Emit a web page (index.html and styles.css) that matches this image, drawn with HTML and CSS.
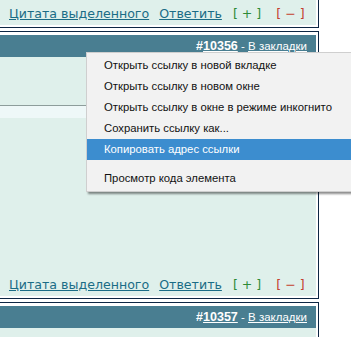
FILE: index.html
```html
<!DOCTYPE html>
<html lang="ru">
<head>
    <meta charset="UTF-8">
    <meta name="viewport" content="width=device-width, initial-scale=1.0">
    <title>Форум</title>
    <link rel="stylesheet" href="styles.css">
</head>
<body>
    <div class="thread">
        <div class="post post-prev">
            <div class="post-body">
                <div class="post-links">
                    <a href="#">Цитата выделенного</a>
                    <a href="#">Ответить</a>
                    <span class="vote-up">[ + ]</span>
                    <span class="vote-down">[ &minus; ]</span>
                </div>
            </div>
        </div>

        <div class="post">
            <div class="post-head">
                <b>#<a href="#">10356</a></b> - <a href="#">В закладки</a>
            </div>
            <div class="post-body post-body-tall">
                <div class="post-sign"></div>
                <div class="post-links">
                    <a href="#">Цитата выделенного</a>
                    <a href="#">Ответить</a>
                    <span class="vote-up">[ + ]</span>
                    <span class="vote-down">[ &minus; ]</span>
                </div>
            </div>
        </div>

        <div class="post">
            <div class="post-head">
                <b>#<a href="#">10357</a></b> - <a href="#">В закладки</a>
            </div>
            <div class="post-body"></div>
        </div>
    </div>

    <!-- context menu over the link -->
    <ul class="context-menu">
        <li>Открыть ссылку в новой вкладке</li>
        <li>Открыть ссылку в новом окне</li>
        <li>Открыть ссылку в окне в режиме инкогнито</li>
        <li>Сохранить ссылку как...</li>
        <li class="active">Копировать адрес ссылки</li>
        <li class="separator"></li>
        <li>Просмотр кода элемента</li>
    </ul>
</body>
</html>
```

FILE: styles.css
```css
body {
    margin: 0;
    background: #fff;
    overflow: hidden;
    font-family: "DejaVu Sans", Verdana, sans-serif;
}
.thread {
    width: 323px;
    margin-left: -4px;
}
.post {
    border: 1px solid #0d2644;
    padding: 3px 2px 2px;
    margin-bottom: 3px;
    background: #fff;
}
.post-prev {
    margin-top: -2px;
    padding-top: 0;
}
.post-head {
    height: 22px;
    line-height: 22px;
    background: #497e91;
    color: #fff;
    text-align: right;
    padding-right: 9px;
    font-family: "Liberation Sans", Arial, sans-serif;
    font-size: 11.5px;
}
.post-head b {
    font-size: 12.5px;
}
.post-head a {
    color: #fff;
}
.post-body {
    background: #dff0eb;
    padding: 6px 10px 2px;
    min-height: 40px;
}
.post-prev .post-body {
    min-height: 0;
}
.post-body-tall {
    padding: 48px 0 2px;
    height: 189px;
    display: flex;
    flex-direction: column;
    justify-content: space-between;
}
.post-body-tall .post-links {
    padding-left: 10px;
}
.post-sign {
    height: 12px;
    border-top: 1px solid #8d9d9b;
    background: #eef8f8;
}
.post-links {
    display: flex;
    gap: 10px;
    font-size: 12.6px;
    line-height: 18px;
    white-space: nowrap;
}
.post-links a {
    color: #1a6c86;
}
.vote-up {
    color: #2e8b36;
    margin-left: 1px;
}
.vote-down {
    color: #c4412f;
    margin-left: 5px;
}
.context-menu {
    position: absolute;
    left: 86px;
    top: 52px;
    width: 290px;
    margin: 0;
    padding: 2px 0;
    list-style: none;
    background: #f2f2f2;
    border: 1px solid #cfcfcf;
    box-shadow: 2px 2px 2px rgba(0, 0, 0, 0.45);
    font-family: "Liberation Sans", Tahoma, sans-serif;
    font-size: 11.3px;
    color: #111;
}
.context-menu li {
    height: 21px;
    line-height: 21px;
    padding-left: 17px;
}
.context-menu .active {
    background: #3c8dcf;
    color: #fff;
}
.context-menu .separator {
    height: 8px;
    padding: 0;
}
```
